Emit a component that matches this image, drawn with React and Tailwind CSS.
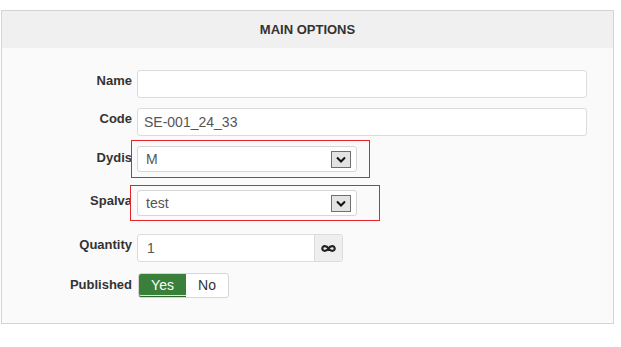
import React from 'react';

const font = { fontFamily: '"Liberation Sans", Arial, sans-serif' };

function Chevron() {
  return (
    <span className="flex h-[17px] w-[20px] items-center justify-center border border-[#6f6f6f] bg-[#e3e3e3]">
      <svg width="10" height="7" viewBox="0 0 10 7">
        <path d="M1 1.5 L5 5.5 L9 1.5" stroke="#111" strokeWidth="2" fill="none" />
      </svg>
    </span>
  );
}

function Select({ value }) {
  return (
    <div className="flex h-[26px] w-[220px] items-center justify-between rounded-[3px] border border-[#d6d6d6] bg-white pl-[8px] pr-[5px]">
      <span className="text-[14px] text-[#555]">{value}</span>
      <Chevron />
    </div>
  );
}

export default function App() {
  return (
    <div className="h-[347px] w-[621px] bg-white pl-[1px] pt-[10px]" style={font}>
      <div className="w-[613px] border border-[#d4d4d4] bg-[#fafafa] pb-[25px]">
        <div className="flex h-[37px] items-center justify-center bg-[#f0f0f0] text-[13px] font-bold text-[#333]">
          MAIN OPTIONS
        </div>

        <div className="flex flex-col pt-[22px] text-[13px]">
          {/* Name */}
          <div className="flex items-start">
            <label className="w-[130px] shrink-0 whitespace-nowrap pt-[2px] text-right font-bold leading-[18px] text-[#333]">Name</label>
            <div className="ml-[5px] h-[28px] w-[450px] rounded-[3px] border border-[#dcdcdc] bg-white" />
          </div>

          {/* Code */}
          <div className="mt-[10px] flex items-start">
            <label className="w-[130px] shrink-0 whitespace-nowrap pt-[2px] text-right font-bold leading-[18px] text-[#333]">Code</label>
            <div className="ml-[5px] flex h-[28px] w-[450px] items-center rounded-[3px] border border-[#dcdcdc] bg-white pl-[6px] text-[14px] text-[#555]">
              SE-001_24_33
            </div>
          </div>

          {/* Dydis */}
          <div className="mt-[4px] flex items-start">
            <label className="w-[130px] shrink-0 whitespace-nowrap pt-[9px] text-right font-bold leading-[18px] text-[#333]">Dydis</label>
            <div className="relative ml-[-1px] w-[239px] border border-[#e8222a] bg-[#fafafa] pb-[5px] pl-[5px] pt-[5px]">
              <Select value="M" />
            </div>
          </div>

          {/* Spalva */}
          <div className="mt-[7px] flex items-start">
            <label className="w-[130px] shrink-0 whitespace-nowrap pt-[7px] text-right font-bold leading-[18px] text-[#333]">Spalva</label>
            <div className="relative ml-[-2px] w-[250px] border border-[#e8222a] bg-[#fafafa] pb-[4px] pl-[6px] pt-[4px]">
              <Select value="test" />
            </div>
          </div>

          {/* Quantity */}
          <div className="mt-[13px] flex items-start">
            <label className="w-[130px] shrink-0 whitespace-nowrap pt-[2px] text-right font-bold leading-[18px] text-[#333]">Quantity</label>
            <div className="ml-[5px] flex h-[28px] w-[206px] rounded-[3px] border border-[#dcdcdc] bg-white">
              <div className="flex flex-1 items-center pl-[9px] text-[14px] text-[#555]">1</div>
              <div className="flex w-[28px] items-center justify-center rounded-r-[3px] border-l border-[#dcdcdc] bg-[#eeeeee]">
                <svg width="15" height="9" viewBox="0 0 15 9">
                  <path
                    d="M7.5 4.5 C5.8 1.5 1.3 1.3 1.3 4.5 C1.3 7.7 5.8 7.5 7.5 4.5 C9.2 1.5 13.7 1.3 13.7 4.5 C13.7 7.7 9.2 7.5 7.5 4.5 Z"
                    stroke="#222"
                    strokeWidth="2.2"
                    fill="none"
                  />
                </svg>
              </div>
            </div>
          </div>

          {/* Published */}
          <div className="mt-[11px] flex items-start">
            <label className="w-[130px] shrink-0 whitespace-nowrap pt-[3px] text-right font-bold leading-[18px] text-[#333]">Published</label>
            <div className="ml-[6px] flex h-[25px] rounded-[3px] border border-[#d6d6d6] bg-white">
              <div className="flex w-[47px] items-center justify-center rounded-l-[2px] border-b border-[#2c6a2c] bg-[#3a803a] text-[14px] text-white shadow-[inset_0_-1px_0_#dfe9df]">
                Yes
              </div>
              <div className="flex w-[42px] items-center justify-center text-[14px] text-[#333]">No</div>
            </div>
          </div>
        </div>
      </div>
    </div>
  );
}
